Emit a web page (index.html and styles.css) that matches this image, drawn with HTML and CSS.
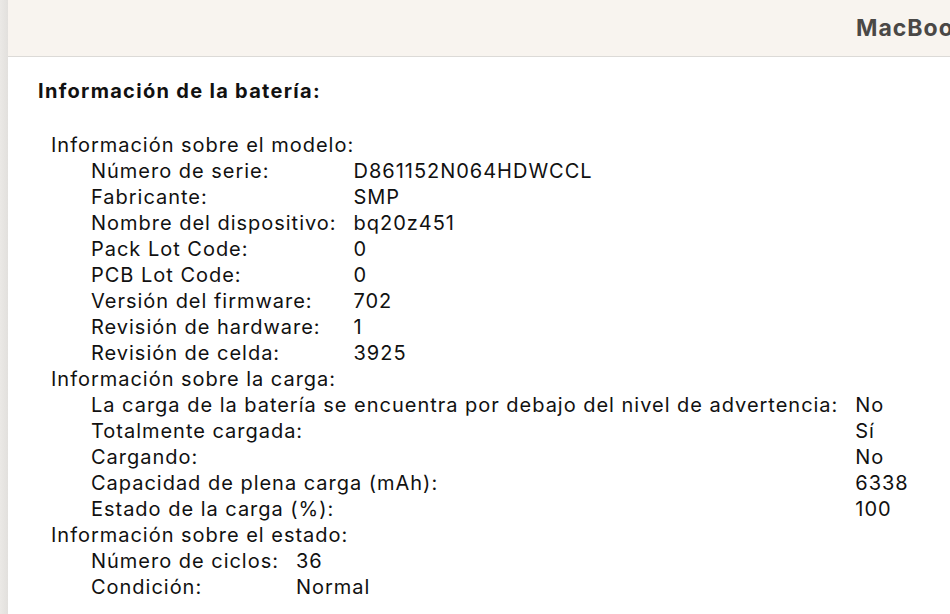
FILE: index.html
```html
<!DOCTYPE html>
<html>
  <head>
    <meta charset="utf-8"/>
    <meta name="viewport" content="width=device-width, initial-scale=1">
    <link rel="stylesheet" href="styles.css">
  </head>
<body>

<div class="window">
  <div class="sidebar"></div>
  <div class="main">
    <div class="titlebar">
      <span class="title">MacBook Pro</span>
    </div>
    <div class="content">
      <h2 class="heading">Información de la batería:</h2>

      <div class="group">
        <div class="group_title">Información sobre el modelo:</div>
        <div class="items">
          <span>Número de serie:</span><span>D861152N064HDWCCL</span>
          <span>Fabricante:</span><span>SMP</span>
          <span>Nombre del dispositivo:</span><span>bq20z451</span>
          <span>Pack Lot Code:</span><span>0</span>
          <span>PCB Lot Code:</span><span>0</span>
          <span>Versión del firmware:</span><span>702</span>
          <span>Revisión de hardware:</span><span>1</span>
          <span>Revisión de celda:</span><span>3925</span>
        </div>
      </div>

      <div class="group">
        <div class="group_title">Información sobre la carga:</div>
        <div class="items">
          <span>La carga de la batería se encuentra por debajo del nivel de advertencia:</span><span>No</span>
          <span>Totalmente cargada:</span><span>Sí</span>
          <span>Cargando:</span><span>No</span>
          <span>Capacidad de plena carga (mAh):</span><span>6338</span>
          <span>Estado de la carga (%):</span><span>100</span>
        </div>
      </div>

      <div class="group">
        <div class="group_title">Información sobre el estado:</div>
        <div class="items">
          <span>Número de ciclos:</span><span>36</span>
          <span>Condición:</span><span>Normal</span>
        </div>
      </div>
    </div>
  </div>
</div>

</body>
</html>
```

FILE: styles.css
```css
* {
  box-sizing: border-box;
}

html, body {
  margin: 0;
  height: 100%;
  overflow: hidden;
}

body {
  font-family: Inter, "Liberation Sans", sans-serif;
  color: #111111;
  background-color: #ffffff;
}

.window {
  display: flex;
  height: 100%;
}

.sidebar {
  width: 8px;
  flex: none;
  background: linear-gradient(to right, #ebe9e6, #e2e0dd);
}

.main {
  flex: 1;
  min-width: 0;
  display: flex;
  flex-direction: column;
}

.titlebar {
  height: 57px;
  flex: none;
  background-color: #f8f4ef;
  border-bottom: 1px solid #dcdad7;
  display: flex;
  align-items: center;
  padding-left: 848px;
  white-space: nowrap;
  overflow: hidden;
}

.title {
  font-size: 23px;
  font-weight: bold;
  letter-spacing: 1px;
  color: #4a4846;
}

.content {
  padding: 21px 0 0 30px;
}

.heading {
  font-size: 20px;
  font-weight: bold;
  letter-spacing: 1.3px;
  margin: 0 0 28px 0;
  line-height: 26px;
}

.group {
  font-size: 20px;
  line-height: 26px;
  letter-spacing: 0.98px;
  padding-left: 13px;
}

.items {
  display: grid;
  grid-template-columns: max-content max-content;
  column-gap: 17px;
  padding-left: 40px;
}
```
